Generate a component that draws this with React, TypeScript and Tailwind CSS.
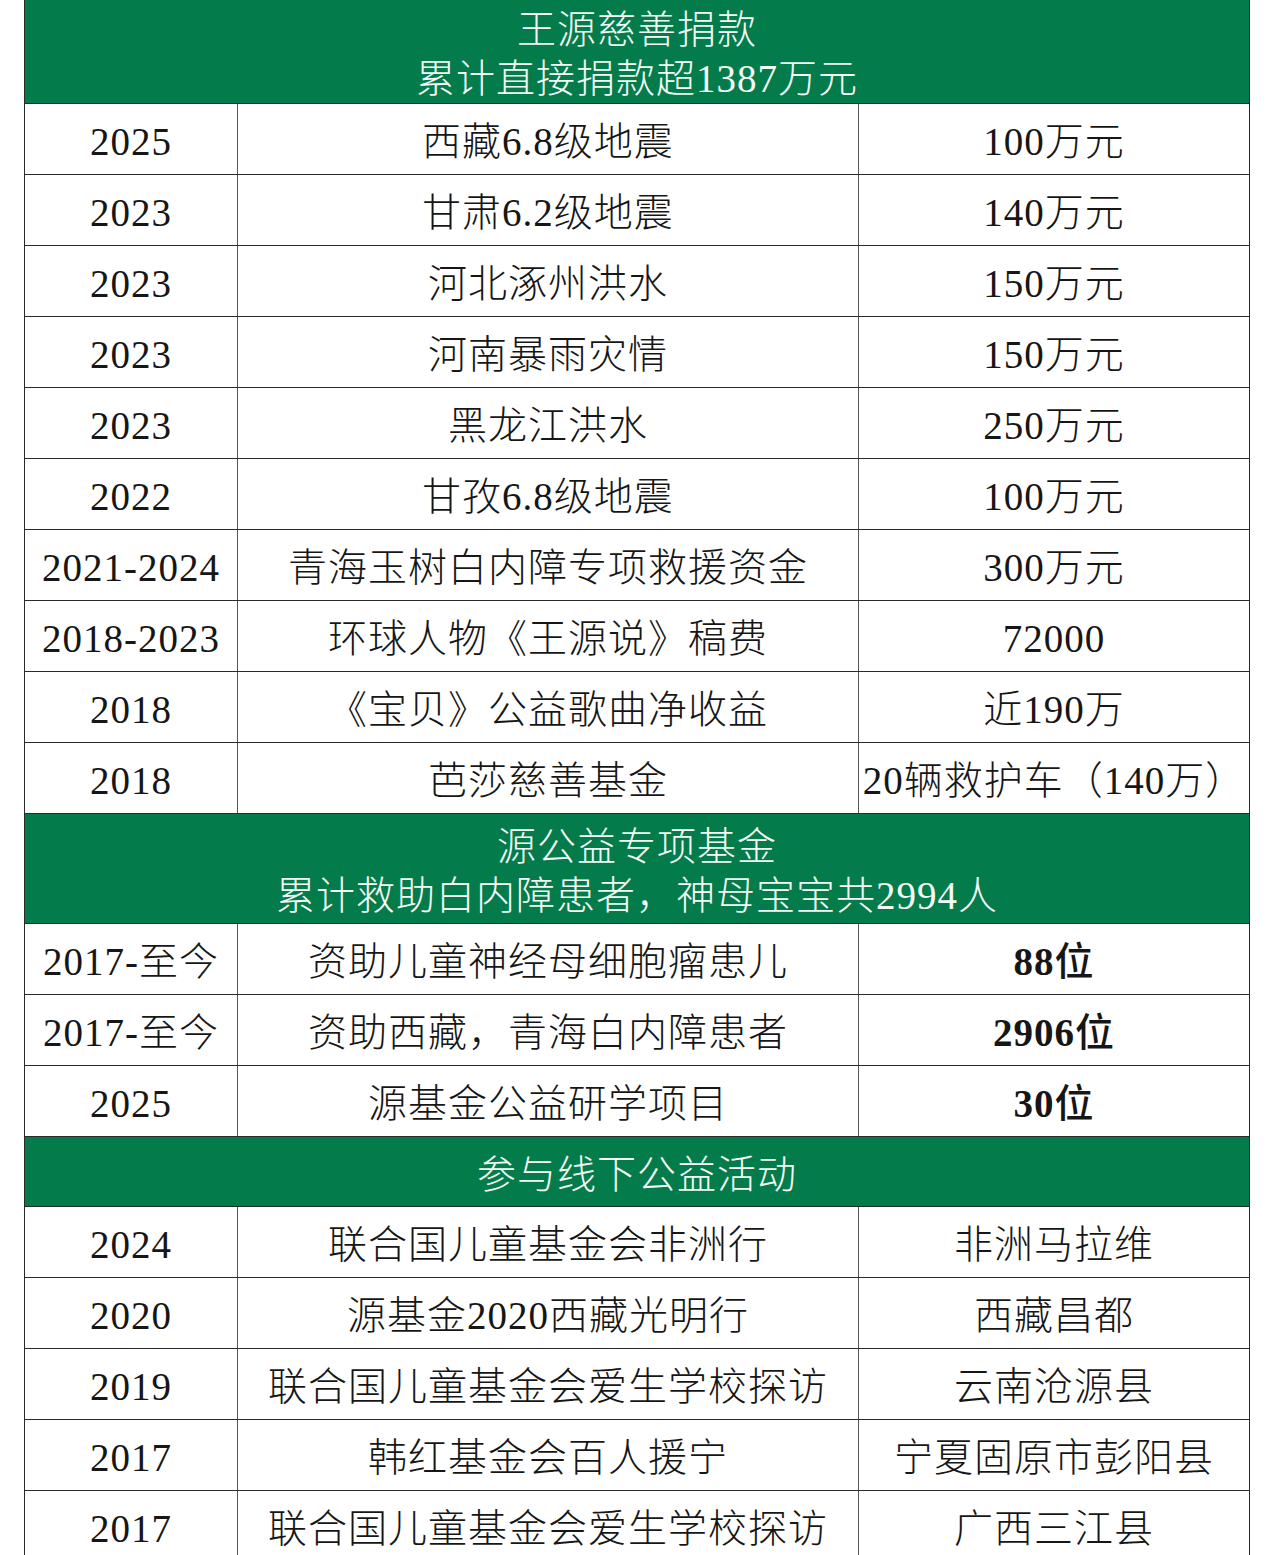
import React from 'react';

type Row = { year: string; item: string; value: string; bold?: boolean };

const section1: Row[] = [
  { year: '2025', item: '西藏6.8级地震', value: '100万元' },
  { year: '2023', item: '甘肃6.2级地震', value: '140万元' },
  { year: '2023', item: '河北涿州洪水', value: '150万元' },
  { year: '2023', item: '河南暴雨灾情', value: '150万元' },
  { year: '2023', item: '黑龙江洪水', value: '250万元' },
  { year: '2022', item: '甘孜6.8级地震', value: '100万元' },
  { year: '2021-2024', item: '青海玉树白内障专项救援资金', value: '300万元' },
  { year: '2018-2023', item: '环球人物《王源说》稿费', value: '72000' },
  { year: '2018', item: '《宝贝》公益歌曲净收益', value: '近190万' },
  { year: '2018', item: '芭莎慈善基金', value: '20辆救护车（140万）' },
];

const section2: Row[] = [
  { year: '2017-至今', item: '资助儿童神经母细胞瘤患儿', value: '88位', bold: true },
  { year: '2017-至今', item: '资助西藏，青海白内障患者', value: '2906位', bold: true },
  { year: '2025', item: '源基金公益研学项目', value: '30位', bold: true },
];

const section3: Row[] = [
  { year: '2024', item: '联合国儿童基金会非洲行', value: '非洲马拉维' },
  { year: '2020', item: '源基金2020西藏光明行', value: '西藏昌都' },
  { year: '2019', item: '联合国儿童基金会爱生学校探访', value: '云南沧源县' },
  { year: '2017', item: '韩红基金会百人援宁', value: '宁夏固原市彭阳县' },
  { year: '2017', item: '联合国儿童基金会爱生学校探访', value: '广西三江县' },
];

const SectionHeader: React.FC<{ lines: string[]; height: string }> = ({ lines, height }) => (
  <div className={`${height} bg-[#047b4b] border-b border-[#1f2f25] flex flex-col items-center justify-center pt-[5px] text-[#f4fbf6] leading-[49px] tracking-[1px]`}>
    {lines.map((l) => (
      <div key={l}>{l}</div>
    ))}
  </div>
);

// bold counts: digits in bold serif, the 位 in medium
const BoldValue: React.FC<{ text: string }> = ({ text }) => {
  const num = text.replace(/[^0-9]/g, '');
  const rest = text.slice(num.length);
  return (
    <span>
      <span className="font-semibold">{num}</span>
      <span className="font-medium">{rest}</span>
    </span>
  );
};

const DataRow: React.FC<{ row: Row }> = ({ row }) => (
  <div className="grid grid-cols-[213px_621px_1fr] h-[71px] border-b border-[#2a2a2a] bg-white text-[#161616] tracking-[1px]">
    <div className="flex items-center justify-center pt-[7px] border-r border-[#555]">{row.year}</div>
    <div className="flex items-center justify-center pt-[7px] border-r border-[#555]">{row.item}</div>
    <div className="flex items-center justify-center pt-[7px] whitespace-nowrap">
      {row.bold ? <BoldValue text={row.value} /> : row.value}
    </div>
  </div>
);

export default function App() {
  return (
    <div className="w-[1276px] h-[1555px] overflow-hidden bg-white font-['Liberation_Serif','Noto_Sans_CJK_SC',serif] text-[39px] font-light">
      <div className="ml-[24px] w-[1226px] border-x border-[#2a2a2a]">
        <SectionHeader height="h-[104px]" lines={['王源慈善捐款', '累计直接捐款超1387万元']} />
        {section1.map((r, i) => (
          <DataRow key={'a' + i} row={r} />
        ))}
        <SectionHeader height="h-[110px]" lines={['源公益专项基金', '累计救助白内障患者，神母宝宝共2994人']} />
        {section2.map((r, i) => (
          <DataRow key={'b' + i} row={r} />
        ))}
        <SectionHeader height="h-[70px]" lines={['参与线下公益活动']} />
        {section3.map((r, i) => (
          <DataRow key={'c' + i} row={r} />
        ))}
      </div>
    </div>
  );
}
